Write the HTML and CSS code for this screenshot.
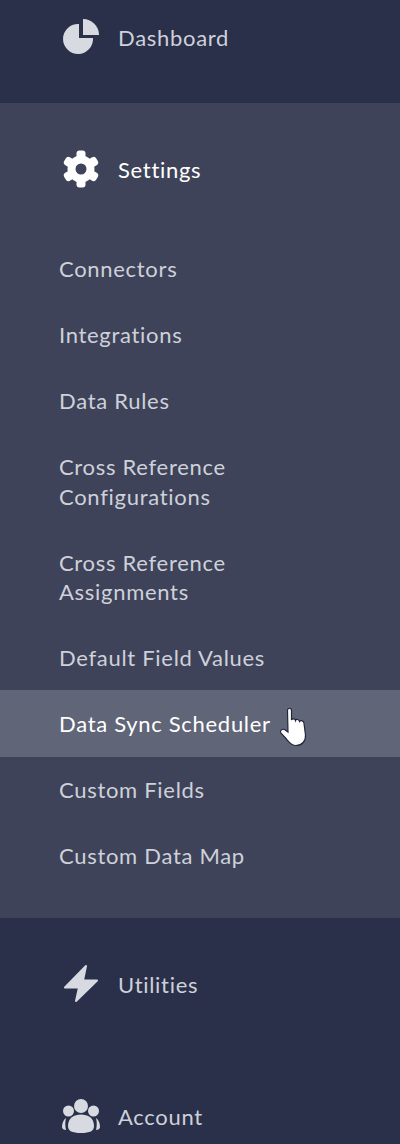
FILE: index.html
```html
<!DOCTYPE html>
<html lang="en">
<head>
    <meta charset="UTF-8">
    <meta name="viewport" content="width=device-width, initial-scale=1.0">
    <title>Sidebar</title>
    <link rel="stylesheet" href="styles.css">
</head>
<body>
    <nav class="sidebar">
        <a class="nav-head first">
            <svg class="nav-icon" viewBox="0 0 40 40"><path d="M19 7V21H33A15 15 0 1 1 19 7Z"/><path d="M23 2A16 16 0 0 1 39 18H23Z"/></svg>
            <span>Dashboard</span>
        </a>
        <div class="nav-group">
            <a class="nav-head active">
                <svg class="nav-icon" viewBox="0 0 40 40">
                    <circle class="ring" cx="21" cy="20" r="9.5"/>
                    <g transform="translate(21 20)">
                        <rect x="-4.5" y="-18.5" width="9" height="9" rx="3"/>
                        <rect x="-4.5" y="-18.5" width="9" height="9" rx="3" transform="rotate(60)"/>
                        <rect x="-4.5" y="-18.5" width="9" height="9" rx="3" transform="rotate(120)"/>
                        <rect x="-4.5" y="-18.5" width="9" height="9" rx="3" transform="rotate(180)"/>
                        <rect x="-4.5" y="-18.5" width="9" height="9" rx="3" transform="rotate(240)"/>
                        <rect x="-4.5" y="-18.5" width="9" height="9" rx="3" transform="rotate(300)"/>
                    </g>
                </svg>
                <span>Settings</span>
            </a>
            <ul class="sub-list">
                <li>Connectors</li>
                <li>Integrations</li>
                <li>Data Rules</li>
                <li>Cross Reference<br>Configurations</li>
                <li>Cross Reference<br>Assignments</li>
                <li>Default Field Values</li>
                <li class="hover">Data Sync Scheduler
                    <svg class="cursor" viewBox="0 0 30 40">
                        <path d="M8.5 3.5C8.5 .5 12.5 .5 12.5 3.5V13C13 11.5 16 11.5 16.5 13.5C17 12 20 12 20.5 14.5C21.5 13 25 13.5 25 16.5L26.5 28C27 34 23 38.5 17 38.5C12 38.5 10 35 7 31.5L1.8 26C.5 24 3 21.5 5.5 22.5L9 25Z"/>
                    </svg>
                </li>
                <li>Custom Fields</li>
                <li>Custom Data Map</li>
            </ul>
        </div>
        <a class="nav-head">
            <svg class="nav-icon" viewBox="0 0 40 40"><path class="bolt" d="M26 2L5 23.5H19L16 37L37 16.5H23Z"/></svg>
            <span>Utilities</span>
        </a>
        <a class="nav-head">
            <svg class="nav-icon" viewBox="0 0 40 40">
                <circle cx="21" cy="10" r="7"/>
                <circle cx="8.5" cy="15" r="5.5"/>
                <circle cx="33.5" cy="15" r="5.5"/>
                <path d="M8 30C8 22 14 18.5 21 18.5S34 22 34 30C34 35 30 37 21 37S8 35 8 30Z"/>
                <path d="M6 22C3 24 2 28 2 31C2 33 4 34 6 34C5 30 5 26 6 22Z"/>
                <path d="M36 22C39 24 40 28 40 31C40 33 38 34 36 34C37 30 37 26 36 22Z"/>
            </svg>
            <span>Account</span>
        </a>
    </nav>
</body>
</html>
```

FILE: styles.css
```css
html, body {
    margin: 0;
    padding: 0;
}
body {
    font-family: Lato, "Open Sans", sans-serif;
    background-color: #2a3049;
    color: #ced1da;
}
.sidebar {
    height: 1144px;
    overflow: hidden;
}
.nav-head {
    display: flex;
    align-items: center;
    gap: 18px;
    height: 132px;
    padding-left: 60px;
    font-size: 22px;
    letter-spacing: 0.7px;
}
.nav-head.first {
    margin-top: -29px;
}
.nav-head.active {
    color: #fff;
}
.nav-icon {
    width: 40px;
    height: 40px;
    fill: #d8dae1;
}
.active .nav-icon {
    fill: #fff;
}
.ring {
    fill: none;
    stroke: #fff;
    stroke-width: 8;
}
.bolt {
    stroke: #d8dae1;
    stroke-width: 2;
    stroke-linejoin: round;
}
.nav-group {
    background-color: #3e4359;
    padding-bottom: 30px;
}
.sub-list {
    list-style-type: none;
    margin: 0;
    padding: 0;
}
.sub-list li {
    position: relative;
    padding: 19px 0 17.5px 59px;
    font-size: 22px;
    line-height: 29.5px;
    letter-spacing: 0.7px;
}
.sub-list li.hover {
    background-color: #616578;
    box-shadow: 0 1px 0 #616578;
    color: #fff;
}
.cursor {
    position: absolute;
    left: 279px;
    top: 17px;
    width: 30px;
    height: 40px;
    fill: #fff;
    stroke: #22263a;
    stroke-width: 1.2;
}
```
